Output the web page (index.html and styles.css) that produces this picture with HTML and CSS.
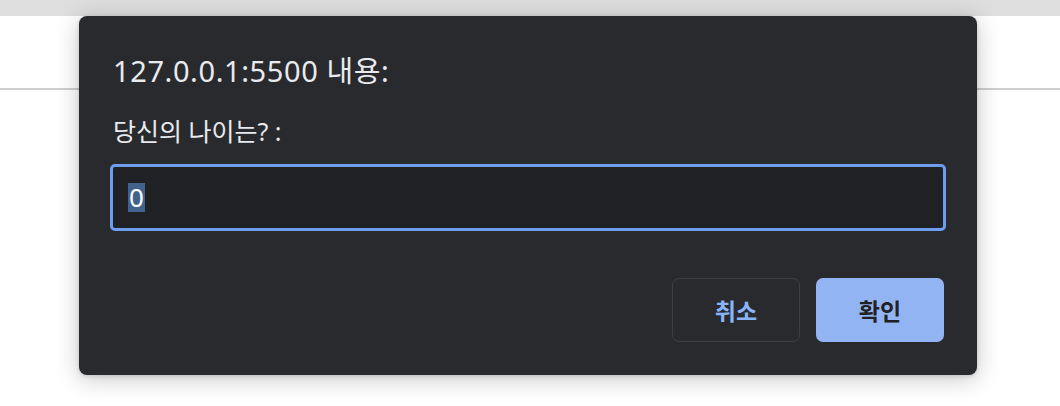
FILE: index.html
```html
<!DOCTYPE html>
<html lang="ko">
<head>
<meta charset="utf-8">
<link rel="stylesheet" href="styles.css">
</head>
<body>
<div class="topbar"></div>
<div class="page">
  <div class="rule"></div>
</div>
<div class="dialog">
  <div class="title">127.0.0.1:5500 내용:</div>
  <div class="message">당신의 나이는? :</div>
  <div class="field"><span class="sel">0</span></div>
  <div class="actions">
    <div class="btn cancel">취소</div>
    <div class="btn ok">확인</div>
  </div>
</div>
</body>
</html>
```
FILE: styles.css
```css
html, body {
  margin: 0;
  padding: 0;
  background: #ffffff;
  width: 1060px;
  height: 406px;
  overflow: hidden;
  font-family: "Noto Sans", "Noto Sans CJK KR", sans-serif;
}
.topbar {
  height: 16px;
  background: #dedede;
}
.page {
  padding-top: 72px;
}
.rule {
  height: 2px;
  background: #cfcfcf;
}
.dialog {
  position: absolute;
  left: 79px;
  top: 16px;
  width: 898px;
  height: 359px;
  box-sizing: border-box;
  background: #292a2d;
  border-radius: 8px;
  box-shadow: 0 4px 24px rgba(0,0,0,0.22), 0 1px 4px rgba(0,0,0,0.15);
  padding: 0 31px 33px 31px;
  display: flex;
  flex-direction: column;
  color: #e8eaed;
}
.title {
  margin-top: 37px;
  padding-left: 3px;
  font-size: 29px;
  line-height: 36px;
  letter-spacing: 0.6px;
  color: #e8eaed;
  white-space: nowrap;
}
.message {
  margin-top: 27px;
  padding-left: 3px;
  font-size: 25px;
  line-height: 30px;
  white-space: nowrap;
}
.field {
  margin-top: 18px;
  height: 67px;
  box-sizing: border-box;
  border: 3px solid #6d9ded;
  border-radius: 5px;
  background: #202124;
  display: flex;
  align-items: center;
  padding-left: 15px;
}
.sel {
  background: #41628c;
  color: #ffffff;
  font-size: 26px;
  line-height: 29px;
  padding: 0 1px;
}
.actions {
  margin-top: auto;
  display: flex;
  justify-content: flex-end;
  gap: 16px;
  padding-right: 2px;
}
.btn {
  width: 128px;
  height: 64px;
  box-sizing: border-box;
  border-radius: 7px;
  display: flex;
  align-items: center;
  justify-content: center;
  font-family: "Noto Sans CJK KR", sans-serif;
  font-size: 23px;
  font-weight: 700;
}
.cancel {
  border: 1px solid #3c4043;
  color: #8ab4f8;
}
.ok {
  background: #93b4f2;
  color: #202124;
}
```
